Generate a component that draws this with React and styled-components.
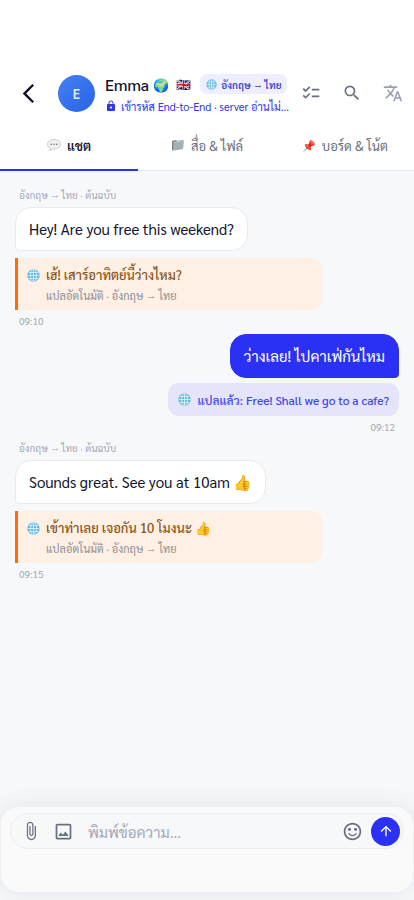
import styled, { createGlobalStyle } from "styled-components";
import {
  MdArrowBackIosNew,
  MdArrowUpward,
  MdAttachFile,
  MdChecklist,
  MdLock,
  MdOutlineImage,
  MdSearch,
  MdSentimentSatisfiedAlt,
  MdTranslate,
} from "react-icons/md";

const Globe = ({ size = 13 }) => (
  <Glyph width={size} height={size} viewBox="0 0 24 24" aria-hidden="true">
    <circle cx="12" cy="12" r="11" fill="#62bbe0" />
    <g fill="none" stroke="#e4f5fb" strokeWidth="1.5">
      <path d="M12 1v22M1 12h22M3 6.5h18M3 17.5h18" />
      <ellipse cx="12" cy="12" rx="5.5" ry="11" />
    </g>
    <circle cx="12" cy="12" r="11" fill="none" stroke="#7cc4de" />
  </Glyph>
);

const SpeechBalloon = () => (
  <Glyph width="14" height="14" viewBox="0 0 28 28" aria-hidden="true">
    <path
      d="M14 3C6.500 3 1 7 1 12.500c0 3.500 2.300 6.500 5.800 8.200 0 1.800-.8 3.300-2 4.300 3 0 5.400-1.200 7-3.100l2.200.1c7.500 0 13-4 13-9.500S21.500 3 14 3z"
      fill="#f0f1f2"
      stroke="#b9bcc0"
      strokeWidth="1.5"
    />
    <g fill="#6c7075">
      <circle cx="8.500" cy="12.500" r="1.600" />
      <circle cx="14" cy="12.500" r="1.600" />
      <circle cx="19.500" cy="12.500" r="1.600" />
    </g>
  </Glyph>
);

const Folder = () => (
  <Glyph width="14" height="14" viewBox="0 0 28 28" aria-hidden="true">
    <path d="M2 6l8-2 2 2 12-2v17L4 25l-2-2z" fill="#77838a" />
    <path d="M5 9l21-4-2 17L4 25z" fill="#a5b0b5" />
    <path d="M5 9l21-4" stroke="#d3dadd" strokeWidth="1.5" />
  </Glyph>
);

const tabs = [
  { icon: <SpeechBalloon />, label: "แชต", active: true },
  { icon: <Folder />, label: "สื่อ & ไฟล์" },
  { icon: "📌", label: "บอร์ด & โน้ต" },
];

const messages = [
  {
    id: 1,
    text: "Hey! Are you free this weekend?",
    translation: "เฮ้! เสาร์อาทิตย์นี้ว่างไหม?",
    time: "09:10",
  },
  {
    id: 2,
    mine: true,
    text: "ว่างเลย! ไปคาเฟ่กันไหม",
    translation: "แปลแล้ว: Free! Shall we go to a cafe?",
    time: "09:12",
  },
  {
    id: 3,
    text: "Sounds great. See you at 10am 👍",
    translation: "เข้าท่าเลย เจอกัน 10 โมงนะ 👍",
    time: "09:15",
  },
];

const Message = ({ mine, text, translation, time }) => {
  if (mine) {
    return (
      <Item $mine>
        <Bubble $mine>{text}</Bubble>
        <SentTranslation>
          <Globe />
          {translation}
        </SentTranslation>
        <Time>{time}</Time>
      </Item>
    );
  }
  return (
    <Item>
      <Origin>อังกฤษ → ไทย · ต้นฉบับ</Origin>
      <Bubble>{text}</Bubble>
      <Translation>
        <TranslationText>
          <Globe />
          {translation}
        </TranslationText>
        <TranslationNote>แปลอัตโนมัติ · อังกฤษ → ไทย</TranslationNote>
      </Translation>
      <Time>{time}</Time>
    </Item>
  );
};

const App = () => (
  <Page>
    <GlobalStyle />
    <Header>
      <IconButton aria-label="ย้อนกลับ" $dark>
        <MdArrowBackIosNew size={23} />
      </IconButton>
      <Avatar>E</Avatar>
      <Contact>
        <NameRow>
          <Name>Emma</Name>
          <NameEmoji>🌍</NameEmoji>
          <Flag>🇬🇧</Flag>
          <LanguageBadge>
            <Globe size={11} />
            อังกฤษ → ไทย
          </LanguageBadge>
        </NameRow>
        <Encryption>
          <MdLock size={12} />
          <span>เข้ารหัส End-to-End · server อ่านไม่...</span>
        </Encryption>
      </Contact>
      <Actions>
        <IconButton aria-label="รายการ">
          <MdChecklist size={20} />
        </IconButton>
        <IconButton aria-label="ค้นหา">
          <MdSearch size={20} />
        </IconButton>
        <IconButton aria-label="แปลภาษา" $muted>
          <MdTranslate size={20} />
        </IconButton>
      </Actions>
    </Header>
    <Tabs>
      {tabs.map((tab) => (
        <Tab key={tab.label} $active={tab.active}>
          <Emoji>{tab.icon}</Emoji>
          {tab.label}
        </Tab>
      ))}
    </Tabs>
    <Chat>
      {messages.map((message) => (
        <Message key={message.id} {...message} />
      ))}
    </Chat>
    <Composer>
      <InputBar>
        <IconButton aria-label="แนบไฟล์">
          <MdAttachFile size={20} />
        </IconButton>
        <IconButton aria-label="รูปภาพ">
          <MdOutlineImage size={21} />
        </IconButton>
        <Input aria-label="ข้อความ" placeholder="พิมพ์ข้อความ..." />
        <IconButton aria-label="อิโมจิ">
          <MdSentimentSatisfiedAlt size={21} />
        </IconButton>
        <SendButton aria-label="ส่ง">
          <MdArrowUpward size={16} />
        </SendButton>
      </InputBar>
    </Composer>
  </Page>
);
export default App;

const GlobalStyle = createGlobalStyle`
  * {
    box-sizing: border-box;
  }
  body {
    margin: 0;
    background: #f7f8fa;
  }
  body,
  button,
  input {
    font-family: "Sarabun", "Noto Sans", "Noto Color Emoji", sans-serif;
  }
`;
const Glyph = styled.svg`
  display: block;
  flex: none;
`;
const Page = styled.div`
  display: flex;
  flex-direction: column;
  min-height: 100vh;
  color: #12142f;
`;
const Header = styled.header`
  display: flex;
  align-items: center;
  padding: 70px 5px 5px 12px;
  background: #ffffff;
`;
const IconButton = styled.button`
  display: flex;
  align-items: center;
  justify-content: center;
  flex: none;
  width: 33px;
  height: 33px;
  padding: 0;
  border: none;
  background: none;
  color: ${({ $dark, $muted }) =>
    $dark ? "#0b0d28" : $muted ? "#9aa0b0" : "#697080"};
  cursor: pointer;
`;
const Avatar = styled.div`
  display: flex;
  align-items: center;
  justify-content: center;
  flex: none;
  width: 37px;
  height: 37px;
  margin: 0 10px 0 13px;
  border-radius: 50%;
  background: linear-gradient(135deg, #4580f0, #2764e8);
  color: #e4ebff;
  font-size: 13px;
  font-weight: 600;
`;
const Contact = styled.div`
  flex: 1;
  min-width: 0;
  padding-top: 2px;
`;
const NameRow = styled.div`
  display: flex;
  align-items: center;
  height: 24px;
  white-space: nowrap;
`;
const Name = styled.span`
  font-size: 16px;
  font-weight: 500;
`;
const NameEmoji = styled.span`
  margin-left: 4px;
  font-size: 13px;
`;
const Flag = styled.span`
  margin: 0 9px 0 7px;
  font-size: 12px;
`;
const LanguageBadge = styled.span`
  display: flex;
  align-items: center;
  gap: 4px;
  height: 20px;
  padding: 0 6px;
  border-radius: 7px;
  background: #eeeffe;
  color: #3a3fd0;
  font-size: 10px;
  font-weight: 600;
`;
const Encryption = styled.div`
  display: flex;
  align-items: center;
  gap: 4px;
  height: 20px;
  color: #2f35f2;
  font-size: 11px;
  svg {
    flex: none;
  }
  span {
    white-space: nowrap;
  }
`;
const Actions = styled.div`
  display: flex;
  gap: 8px;
  margin-left: 6px;
`;
const Tabs = styled.nav`
  display: flex;
  background: #ffffff;
  border-bottom: 1px solid #e3e7ee;
`;
const Tab = styled.button`
  display: flex;
  align-items: center;
  justify-content: center;
  flex: 1;
  gap: 6px;
  height: 50px;
  margin-bottom: -1px;
  padding: 0;
  border: none;
  border-bottom: 2px solid ${({ $active }) => ($active ? "#2b31f4" : "transparent")};
  background: none;
  color: ${({ $active }) => ($active ? "#12142f" : "#697080")};
  font-size: 13px;
  font-weight: ${({ $active }) => ($active ? 600 : 400)};
`;
const Emoji = styled.span`
  font-size: 11px;
`;
const Chat = styled.main`
  display: flex;
  flex: 1;
  flex-direction: column;
  gap: 5px;
  padding: 16px 15px;
`;
const Item = styled.article`
  display: flex;
  flex-direction: column;
  align-items: ${({ $mine }) => ($mine ? "flex-end" : "flex-start")};
`;
const Origin = styled.div`
  margin-bottom: 4px;
  padding: 0 4px;
  color: #a3a9b8;
  font-size: 10px;
  line-height: 16px;
`;
const Bubble = styled.div`
  padding: 10px 13px;
  border: 1px solid ${({ $mine }) => ($mine ? "#2b31f4" : "#e8eaef")};
  border-radius: ${({ $mine }) => ($mine ? "16px 16px 4px 16px" : "16px 16px 16px 4px")};
  background: ${({ $mine }) => ($mine ? "#2b31f4" : "#ffffff")};
  color: ${({ $mine }) => ($mine ? "#ffffff" : "#12142f")};
  font-size: 15px;
  line-height: 22px;
`;
const Translation = styled.div`
  width: 80%;
  margin-top: 7px;
  padding: 6px 9px 4px;
  border-left: 3px solid #ff6a0a;
  border-radius: 0 10px 10px 0;
  background: #fff0e5;
`;
const TranslationText = styled.div`
  display: flex;
  align-items: center;
  gap: 6px;
  color: #8a5518;
  font-size: 13px;
  font-weight: 500;
  line-height: 22px;
`;
const TranslationNote = styled.div`
  padding-left: 19px;
  color: #8d8f98;
  font-size: 11px;
  line-height: 20px;
`;
const SentTranslation = styled.div`
  display: flex;
  align-items: center;
  gap: 6px;
  height: 33px;
  margin-top: 5px;
  padding: 0 10px;
  border-radius: 11px;
  background: #e4e4fa;
  color: #4146ee;
  font-size: 12px;
  font-weight: 500;
`;
const Time = styled.time`
  margin-top: 3px;
  padding: 0 4px;
  color: #a3a9b8;
  font-size: 10px;
  line-height: 16px;
`;
const Composer = styled.footer`
  height: 85px;
  margin: 0 1px 8px;
  padding: 6px 9px;
  border-radius: 18px;
  background: #fafafb;
  box-shadow: 0 0 24px rgba(40, 50, 80, 0.1);
`;
const InputBar = styled.div`
  display: flex;
  align-items: center;
  height: 36px;
  padding: 0 3px;
  border: 1px solid #eceef2;
  border-radius: 18px;
  background: #f7f8fa;
`;
const Input = styled.input`
  flex: 1;
  min-width: 0;
  padding: 0 8px;
  border: none;
  outline: none;
  background: none;
  font-size: 15px;
  &::placeholder {
    color: #a3a9b8;
  }
`;
const SendButton = styled.button`
  display: flex;
  align-items: center;
  justify-content: center;
  flex: none;
  width: 29px;
  height: 29px;
  margin-left: 2px;
  padding: 0;
  border: none;
  border-radius: 50%;
  background: #2b31f4;
  color: #ffffff;
`;
